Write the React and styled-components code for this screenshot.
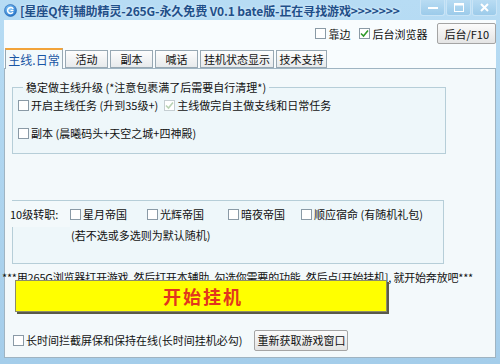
import React from 'react';
import styled, { createGlobalStyle } from 'styled-components';

const Global = createGlobalStyle`
  html, body { margin: 0; padding: 0; background: #a9d2ee; }
  body { font-family: "Noto Sans CJK SC", "Liberation Sans", sans-serif; font-size: 11px; color: #111; }
  * { box-sizing: border-box; }
`;

const Win = styled.div`
  width: 500px;
  height: 364px;
  background: linear-gradient(#b7dcf4, #a4cdea);
  padding: 0 4px 6px 4px;
  display: flex;
  flex-direction: column;
`;

const TitleBar = styled.div`
  height: 20px;
  margin: 0 -4px;
  padding-left: 4px;
  display: flex;
  align-items: center;
`;

const TitleText = styled.div`
  margin-left: 3px;
  font-weight: bold;
  font-size: 12px;
  letter-spacing: -0.1px;
  color: #1f4f89;
  white-space: nowrap;
  text-shadow: 0 0 3px #e6f4fd;
`;

const Controls = styled.div`
  margin-left: auto;
  align-self: flex-start;
  display: flex;
  gap: 1px;
  margin-right: 3px;
`;

const CtrlBtn = styled.div`
  width: 25px;
  height: 16px;
  background: linear-gradient(#b9dcf3, #9ccbea);
  border: 1px solid #c9e4f6;
  border-top: none;
  border-radius: 0 0 3px 3px;
  display: flex;
  align-items: center;
  justify-content: center;
`;

const Client = styled.div`
  flex: 1;
  background: #f8fcfe;
  display: flex;
  flex-direction: column;
`;

const TopRow = styled.div`
  height: 27px;
  display: flex;
  align-items: center;
  justify-content: flex-end;
`;

const Check = styled.label`
  display: flex;
  align-items: center;
  gap: 2px;
  white-space: nowrap;
  margin-right: ${p => p.$mr || 0}px;
  color: #111;
`;

const Box = styled.span`
  width: 11px;
  height: 11px;
  flex: none;
  background: #fff;
  border: 1px solid ${p => (p.$disabled ? '#c5ced2' : '#8a9aa6')};
  display: flex;
  align-items: center;
  justify-content: center;
`;

const Btn = styled.div`
  height: 21px;
  padding: 0 ${p => p.$px ?? 6}px;
  display: flex;
  align-items: center;
  background: linear-gradient(#fbfbfb, #e4e4e4);
  border: 1px solid #a4a4a4;
  border-radius: 2px;
  white-space: nowrap;
  margin-left: ${p => p.$ml || 0}px;
`;

const Tabs = styled.div`
  height: 21px;
  display: flex;
  align-items: flex-end;
  padding-left: 1px;
  gap: 2px;
`;

const Tab = styled.div`
  width: ${p => p.$w}px;
  height: ${p => (p.$active ? 21 : 18)}px;
  border: 1px solid #98a8b3;
  border-bottom: ${p => (p.$active ? 'none' : '1px solid #98a8b3')};
  border-top: ${p => (p.$active ? '2px solid #f2a33a' : '1px solid #98a8b3')};
  background: ${p => (p.$active ? '#f2f9fb' : 'linear-gradient(#fdfdfd, #e7eaec)')};
  color: ${p => (p.$active ? '#1a56a4' : '#111')};
  font-size: ${p => (p.$active ? 12 : 11)}px;
  display: flex;
  align-items: center;
  justify-content: center;
  margin-bottom: ${p => (p.$active ? -1 : 0)}px;
  position: relative;
`;

const Panel = styled.div`
  flex: 1;
  border: 1px solid #9fb4c2;
  background: #f3f9fb;
  display: flex;
  flex-direction: column;
  padding-left: 7px;
`;

const Group = styled.fieldset`
  margin: 10px 0 0 0;
  width: 434px;
  height: 75px;
  border: 1px solid #b6ced8;
  background: #eef7fa;
  padding: 2px 0 0 5px;
  display: flex;
  flex-direction: column;
`;

const Legend = styled.legend`
  padding: 0 3px;
  margin-left: 5px;
  white-space: nowrap;
`;

const Row = styled.div`
  height: ${p => p.$h}px;
  display: flex;
  align-items: center;
  gap: ${p => p.$gap || 0}px;
  padding-left: ${p => p.$pl || 0}px;
`;

const Disabled = styled.span`
  color: #111;
`;

const Group2 = styled.div`
  margin-top: 46px;
  width: 432px;
  height: 64px;
  border: 1px solid #b6ced8;
  background: #eef7fa;
  display: flex;
  flex-direction: column;
`;

const JobLabel = styled.span`
  width: 60px;
  margin-left: -3px;
  background: #f3f9fb;
  align-self: stretch;
  display: flex;
  align-items: center;
`;

const Hint = styled.div`
  margin-top: 6px;
  margin-left: -10px;
  height: 14px;
  line-height: 14px;
  white-space: nowrap;
  letter-spacing: -0.2px;
`;

const StartBtn = styled.div`
  position: relative;
  margin-top: -4px;
  width: 372px;
  height: 32px;
  margin-left: 3px;
  background: #ffff00;
  border: 1px solid #8d8d6a;
  box-shadow: 2px 2px 0 #5a5a4a;
  display: flex;
  align-items: center;
  justify-content: center;
  padding-left: 4px;
  color: #e2361d;
  font-size: 18px;
  font-weight: bold;
  letter-spacing: 2px;
`;

const BottomRow = styled.div`
  margin-top: 17px;
  height: 22px;
  display: flex;
  align-items: center;
  padding-left: 1px;
`;

const CheckMark = ({ color }) => (
  <svg width="9" height="9" viewBox="0 0 9 9">
    <path d="M1 4.5 L3.5 7 L8 1.5" fill="none" stroke={color} strokeWidth="1.6" />
  </svg>
);

const CB = ({ checked, disabled, children, mr }) => (
  <Check $mr={mr}>
    <Box $disabled={disabled}>{checked && <CheckMark color={disabled ? '#b9d3b4' : '#2f9a2a'} />}</Box>
    {disabled ? <Disabled>{children}</Disabled> : children}
  </Check>
);

const AppIcon = () => (
  <svg width="13" height="13" viewBox="0 0 13 13">
    <defs>
      <radialGradient id="ig" cx="40%" cy="35%" r="70%">
        <stop offset="0" stopColor="#8fd0ff" />
        <stop offset="1" stopColor="#1f6fc6" />
      </radialGradient>
    </defs>
    <circle cx="6.5" cy="6.5" r="6" fill="url(#ig)" stroke="#2a68b0" strokeWidth="0.6" />
    <path d="M9.2 5 A3 3 0 1 0 9 8.3" fill="none" stroke="#fff" strokeWidth="1.5" />
    <path d="M6.5 6.5 H9.5" stroke="#fff" strokeWidth="1.3" />
  </svg>
);

export default function App() {
  return (
    <>
      <Global />
      <Win>
        <TitleBar>
          <AppIcon />
          <TitleText>[星座Q传]辅助精灵-265G-永久免费 V0.1 bate版-正在寻找游戏&gt;&gt;&gt;&gt;&gt;&gt;&gt;</TitleText>
          <Controls>
            <CtrlBtn>
              <svg width="10" height="4"><rect x="0" y="1" width="10" height="2" fill="#fff" /></svg>
            </CtrlBtn>
            <CtrlBtn>
              <svg width="10" height="9"><rect x="0.5" y="0.5" width="9" height="8" fill="none" stroke="#fff" /><rect x="0.5" y="0.5" width="9" height="2" fill="#fff" /></svg>
            </CtrlBtn>
            <CtrlBtn>
              <svg width="9" height="9"><path d="M1 1 L8 8 M8 1 L1 8" stroke="#fff" strokeWidth="2" /></svg>
            </CtrlBtn>
          </Controls>
        </TitleBar>
        <Client>
          <TopRow>
            <CB mr={9}>靠边</CB>
            <CB checked>后台浏览器</CB>
            <Btn $ml={10}>后台/F10</Btn>
          </TopRow>
          <Tabs>
            <Tab $w={58} $active>主线.日常</Tab>
            <Tab $w={43}>活动</Tab>
            <Tab $w={43}>副本</Tab>
            <Tab $w={43}>喊话</Tab>
            <Tab $w={74}>挂机状态显示</Tab>
            <Tab $w={51}>技术支持</Tab>
          </Tabs>
          <Panel>
            <Group>
              <Legend>稳定做主线升级 (*注意包裹满了后需要自行清理*)</Legend>
              <Row $h={16} $gap={6}>
                <CB>开启主线任务 (升到35级+)</CB>
                <CB checked disabled>主线做完自主做支线和日常任务</CB>
              </Row>
              <Row $h={40}>
                <CB>副本 (晨曦码头+天空之城+四神殿)</CB>
              </Row>
            </Group>
            <Group2>
              <Row $h={26}>
                <JobLabel>10级转职:</JobLabel>
                <CB mr={20}>星月帝国</CB>
                <CB mr={24}>光辉帝国</CB>
                <CB mr={16}>暗夜帝国</CB>
                <CB>顺应宿命 (有随机礼包)</CB>
              </Row>
              <Row $h={16} $pl={58}>(若不选或多选则为默认随机)</Row>
            </Group2>
            <Hint>***用265G浏览器打开游戏, 然后打开本辅助, 勾选你需要的功能, 然后点[开始挂机], 就开始奔放吧***</Hint>
            <StartBtn>开始挂机</StartBtn>
            <BottomRow>
              <CB>长时间拦截屏保和保持在线(长时间挂机必勾)</CB>
              <Btn $ml={12} $px={2}>重新获取游戏窗口</Btn>
            </BottomRow>
          </Panel>
        </Client>
      </Win>
    </>
  );
}
